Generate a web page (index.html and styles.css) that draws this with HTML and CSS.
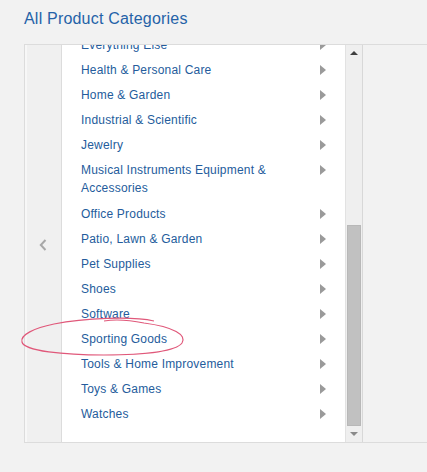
FILE: index.html
```html
<!DOCTYPE html>
<html>
<head>
<meta charset="utf-8">
<link rel="stylesheet" href="styles.css">
</head>
<body>
<div class="page">
  <h1 class="title">All Product Categories</h1>
  <div class="panel">
    <div class="nav">
      <svg class="chev" width="8" height="12" viewBox="0 0 8 12"><path d="M6.5 1 L1.8 6 L6.5 11" fill="none" stroke="#a8a8a8" stroke-width="2"/></svg>
    </div>
    <div class="list-wrap">
      <ul class="list">
        <li class="item"><span class="label">Everything Else</span><span class="arr"></span></li>
        <li class="item"><span class="label">Health &amp; Personal Care</span><span class="arr"></span></li>
        <li class="item"><span class="label">Home &amp; Garden</span><span class="arr"></span></li>
        <li class="item"><span class="label">Industrial &amp; Scientific</span><span class="arr"></span></li>
        <li class="item"><span class="label">Jewelry</span><span class="arr"></span></li>
        <li class="item"><span class="label">Musical Instruments Equipment &amp; Accessories</span><span class="arr"></span></li>
        <li class="item"><span class="label">Office Products</span><span class="arr"></span></li>
        <li class="item"><span class="label">Patio, Lawn &amp; Garden</span><span class="arr"></span></li>
        <li class="item"><span class="label">Pet Supplies</span><span class="arr"></span></li>
        <li class="item"><span class="label">Shoes</span><span class="arr"></span></li>
        <li class="item"><span class="label">Software</span><span class="arr"></span></li>
        <li class="item"><span class="label">Sporting Goods</span><span class="arr"></span></li>
        <li class="item"><span class="label">Tools &amp; Home Improvement</span><span class="arr"></span></li>
        <li class="item"><span class="label">Toys &amp; Games</span><span class="arr"></span></li>
        <li class="item"><span class="label">Watches</span><span class="arr"></span></li>
      </ul>
    </div>
    <div class="scrollbar">
      <div class="sb-btn"><span class="tri-up"></span></div>
      <div class="sb-track"><div class="sb-thumb"></div></div>
      <div class="sb-btn"><span class="tri-down"></span></div>
    </div>
    <div class="rest"></div>
  </div>
  <svg class="annot" width="200" height="50" viewBox="0 0 200 50">
    <path d="M150 8 C128 3, 80 5, 50 11 C30 15, 16 22, 18 29 C20 38, 60 42, 100 42 C142 42, 172 38, 178 30 C183 22, 170 14, 140 10 C125 7, 112 6, 100 8" fill="none" stroke="#e0587a" stroke-width="1.2"/>
  </svg>
</div>
</body>
</html>
```

FILE: styles.css
```css
html, body {
  margin: 0;
  padding: 0;
  background: #f2f2f2;
}
.page {
  position: relative;
  width: 427px;
  height: 472px;
  overflow: hidden;
  padding-top: 10px;
  box-sizing: border-box;
  font-family: "Liberation Sans", Arial, sans-serif;
}
.title {
  margin: 0 0 16px 24px;
  font-size: 16px;
  line-height: 18px;
  font-weight: normal;
  letter-spacing: 0.2px;
  color: #2562a8;
}
.panel {
  margin-left: 24px;
  height: 399px;
  border-top: 1px solid #dcdcdc;
  border-bottom: 1px solid #dcdcdc;
  border-left: 1px solid #dcdcdc;
  display: flex;
  box-sizing: border-box;
}
.nav {
  width: 37px;
  background: #f0f0f0;
  border-left: 2px solid #f7f7f7;
  border-right: 1px solid #dcdcdc;
  box-sizing: border-box;
  display: flex;
  align-items: center;
  justify-content: center;
  flex: none;
}
.chev { display: block; margin-left: -3px; margin-top: 2px; }
.list-wrap {
  width: 283px;
  background: #ffffff;
  overflow: hidden;
  flex: none;
}
.list {
  list-style: none;
  margin: -12px 0 0 0;
  padding: 0;
}
.item {
  display: flex;
  align-items: flex-start;
  padding: 3px 0 4px 19px;
  font-size: 12px;
  line-height: 18px;
  letter-spacing: 0.2px;
  color: #245c9c;
}
.item:nth-child(n+7) {
  position: relative;
  top: 1px;
}
.label {
  width: 220px;
}
.arr {
  width: 0;
  height: 0;
  margin-left: 19px;
  margin-top: 4px;
  border-top: 5px solid transparent;
  border-bottom: 5px solid transparent;
  border-left: 6px solid #9a9a9a;
}
.scrollbar {
  width: 18px;
  background: #efefef;
  border-left: 1px solid #e2e2e2;
  border-right: 1px solid #d8d8d8;
  box-sizing: border-box;
  display: flex;
  flex-direction: column;
  flex: none;
}
.sb-btn {
  height: 16px;
  display: flex;
  align-items: center;
  justify-content: center;
  flex: none;
}
.tri-up {
  width: 0; height: 0;
  border-left: 4px solid transparent;
  border-right: 4px solid transparent;
  border-bottom: 4px solid #404040;
}
.tri-down {
  width: 0; height: 0;
  border-left: 4px solid transparent;
  border-right: 4px solid transparent;
  border-top: 4px solid #8a8a8a;
}
.sb-track {
  flex: 1;
  display: flex;
  flex-direction: column;
  justify-content: flex-end;
  padding: 0 1px;
}
.sb-thumb {
  height: 201px;
  background: #c1c1c1;
  border: 1px solid #b8b8b8;
  box-sizing: border-box;
}
.rest {
  flex: 1;
  background: #f2f2f2;
}
.annot {
  position: absolute;
  left: 4px;
  top: 313px;
}
```
